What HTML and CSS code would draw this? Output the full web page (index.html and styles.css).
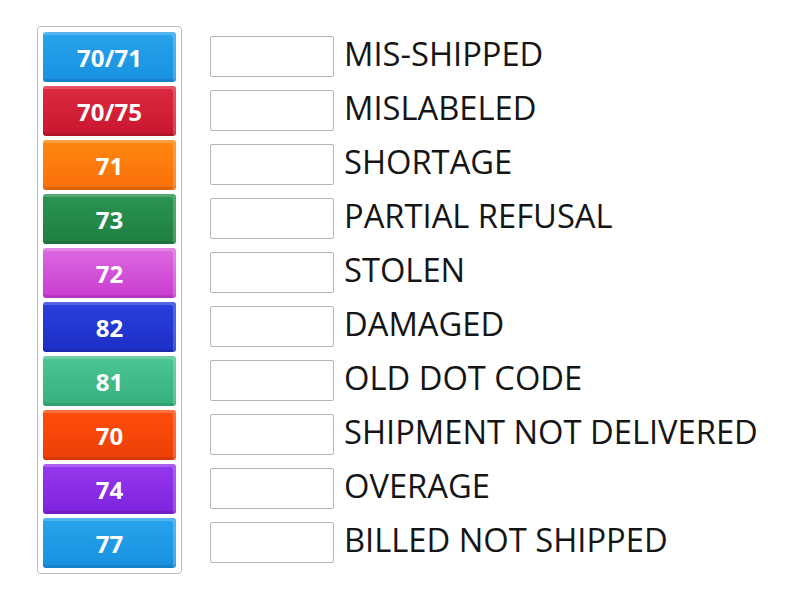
FILE: index.html
```html
<!DOCTYPE html>
<html>
<head>
<meta charset="utf-8">
<link rel="stylesheet" href="styles.css">
</head>
<body>
<div class="page">
  <div class="bank">
    <div class="tile c1">70/71</div>
    <div class="tile c2">70/75</div>
    <div class="tile c3">71</div>
    <div class="tile c4">73</div>
    <div class="tile c5">72</div>
    <div class="tile c6">82</div>
    <div class="tile c7">81</div>
    <div class="tile c8">70</div>
    <div class="tile c9">74</div>
    <div class="tile c1">77</div>
  </div>
  <div class="rows">
    <div class="row"><div class="slot"></div><div class="label">MIS-SHIPPED</div></div>
    <div class="row"><div class="slot"></div><div class="label">MISLABELED</div></div>
    <div class="row"><div class="slot"></div><div class="label">SHORTAGE</div></div>
    <div class="row"><div class="slot"></div><div class="label">PARTIAL REFUSAL</div></div>
    <div class="row"><div class="slot"></div><div class="label">STOLEN</div></div>
    <div class="row"><div class="slot"></div><div class="label">DAMAGED</div></div>
    <div class="row"><div class="slot"></div><div class="label">OLD DOT CODE</div></div>
    <div class="row"><div class="slot"></div><div class="label">SHIPMENT NOT DELIVERED</div></div>
    <div class="row"><div class="slot"></div><div class="label">OVERAGE</div></div>
    <div class="row"><div class="slot"></div><div class="label">BILLED NOT SHIPPED</div></div>
  </div>
</div>
</body>
</html>
```

FILE: styles.css
```css
html, body {
  margin: 0;
  padding: 0;
  background: #fff;
}
body {
  font-family: "Open Sans", "DejaVu Sans", sans-serif;
}
.page {
  display: flex;
  align-items: flex-start;
  padding: 26px 0 0 37px;
}
.bank {
  display: flex;
  flex-direction: column;
  gap: 4px;
  padding: 5px;
  border: 1px solid #bdbdbd;
  border-radius: 4px;
}
.tile {
  width: 133px;
  height: 50px;
  border-radius: 3px;
  box-sizing: border-box;
  display: flex;
  align-items: center;
  justify-content: center;
  color: #fff;
  font-weight: 700;
  font-size: 24px;
  box-shadow: inset -3px 3px 0 rgba(255,255,255,0.2), inset 0 -3px 0 rgba(0,0,0,0.1);
}
.c1 { background: linear-gradient(#2aa3ec, #1790e0); }
.c2 { background: linear-gradient(#de2a40, #c8162e); }
.c3 { background: linear-gradient(#ff870f, #f9700a); }
.c4 { background: linear-gradient(#2a9451, #1f7f42); }
.c5 { background: linear-gradient(#dc6ae0, #c93bcf); }
.c6 { background: linear-gradient(#2840dc, #1c2fc6); }
.c7 { background: linear-gradient(#4cc692, #35b07c); }
.c8 { background: linear-gradient(#ff4d0c, #ec3f06); }
.c9 { background: linear-gradient(#9538ec, #7f22de); }
.rows {
  display: flex;
  flex-direction: column;
  gap: 4px;
  margin-top: 6px;
  margin-left: 28px;
}
.row {
  height: 50px;
  display: flex;
  align-items: flex-start;
}
.slot {
  width: 124px;
  height: 41px;
  margin-top: 4px;
  box-sizing: border-box;
  border: 1px solid #b5b5b5;
  border-radius: 2px;
  background: #fff;
}
.label {
  margin-left: 10px;
  font-size: 32.7px;
  line-height: 40px;
  margin-top: 2px;
  color: #151515;
  white-space: nowrap;
}
```
